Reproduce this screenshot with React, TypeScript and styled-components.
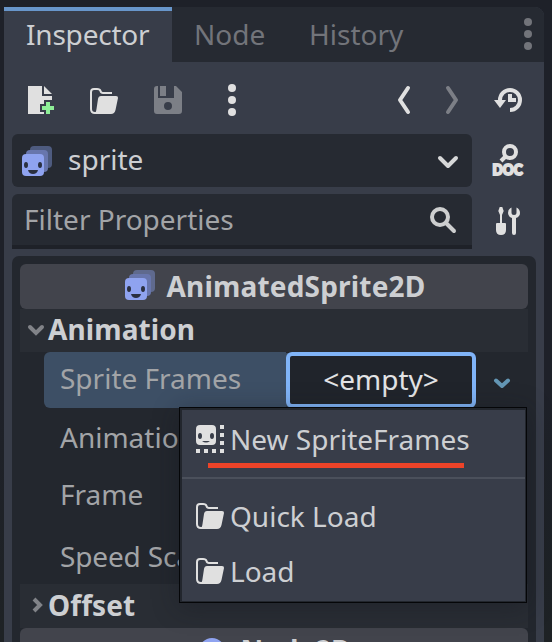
import React from "react";
import styled, { createGlobalStyle } from "styled-components";

const Global = createGlobalStyle`
  * { box-sizing: border-box; }
  body { margin: 0; background: #1e2129; overflow: hidden; }
`;

const Page = styled.div`
  width: 552px;
  height: 642px;
  padding: 7px 8px 0 4px;
  overflow: hidden;
  background: linear-gradient(#1e2129 60%, #1e2225);
  font-family: "Noto Sans", sans-serif;
  font-size: 28px;
  line-height: 38px;
  white-space: pre;
  color: #cdcfd2;
`;

const Dock = styled.div`
  display: flex;
  flex-direction: column;
  height: 660px;
  background: #383d49;
  border-top-right-radius: 9px;
`;

const TabBar = styled.div`
  display: flex;
  flex: none;
  height: 55px;
  background: #262a32;
  border-top-right-radius: 9px;
`;

const Tab = styled.div<{ $active?: boolean; $width: number }>`
  width: ${(p) => p.$width}px;
  height: 55px;
  padding: ${(p) => (p.$active ? "4px 0 0 22px" : "8px 0 0 22px")};
  border-top: ${(p) => (p.$active ? "4px solid #6896cb" : "none")};
  background: ${(p) => (p.$active ? "#383d49" : "transparent")};
  color: ${(p) => (p.$active ? "#cdcfd2" : "#72747a")};
  letter-spacing: ${(p) => (p.$active ? "-0.2px" : "0")};
`;

const TabMenu = styled.div`
  margin: 11px 0 0 auto;
  height: 32px;
`;

const Toolbar = styled.div`
  display: flex;
  flex: none;
  align-items: center;
  height: 72px;
  padding: 4px 20px 0 22px;
`;

const ToolGroup = styled.div<{ $gap: number; $end?: boolean }>`
  display: flex;
  gap: ${(p) => p.$gap}px;
  margin-left: ${(p) => (p.$end ? "auto" : "0")};
`;

const Glyph = styled.svg`
  display: block;
  flex: none;
  overflow: visible;
`;

const FieldRow = styled.div<{ $height: number; $after: number }>`
  display: flex;
  flex: none;
  height: ${(p) => p.$height}px;
  margin: 0 21px ${(p) => p.$after}px 8px;
`;

const ObjectSelect = styled.div`
  display: flex;
  flex: none;
  width: 460px;
  padding: 6px 8px 0 8px;
  border-radius: 6px;
  background: #262a32;
`;

const ObjectName = styled.span`
  margin: 0 auto 0 16px;
`;

const FilterField = styled.div`
  display: flex;
  flex: none;
  width: 460px;
  padding: 6px 13px 0 12px;
  border-radius: 6px 6px 0 0;
  border-bottom: 4px solid #1e2128;
  background: #262a32;
  color: #a2a4a7;
`;

const IconSlot = styled.div<{ $top: number; $end?: boolean }>`
  margin: ${(p) => p.$top}px 0 0 ${(p) => (p.$end ? "auto" : "0")};
`;

const Tree = styled.div`
  flex: 1;
  margin: 0 8px;
  padding: 8px 8px 0;
  border-radius: 7px 7px 0 0;
  background: #23272e;
`;

const Category = styled.div<{ $spacing?: number }>`
  display: flex;
  justify-content: center;
  height: 45px;
  padding-top: 3px;
  gap: 12px;
  border-radius: 6px;
  background: #42444c;
  font-weight: 700;
  letter-spacing: ${(p) => p.$spacing ?? 0}px;
`;

const Section = styled.div<{ $height: number; $lift?: number }>`
  display: flex;
  align-items: center;
  height: ${(p) => p.$height}px;
  padding: 0 0 ${(p) => p.$lift ?? 0}px 4px;
  background: #292d34;
  font-weight: 700;
  letter-spacing: 0.1px;
`;

const Property = styled.div<{ $height: number }>`
  display: flex;
  align-items: center;
  height: ${(p) => p.$height}px;
  margin-left: 24px;
`;

const PropertyLabel = styled.div<{ $selected?: boolean; $spacing?: number }>`
  width: 242px;
  height: ${(p) => (p.$selected ? "56px" : "38px")};
  padding: ${(p) => (p.$selected ? "7px 0 0 16px" : "0 0 0 16px")};
  border-radius: 6px 0 0 6px;
  background: ${(p) => (p.$selected ? "#3d4f65" : "transparent")};
  color: #a2a4a7;
  letter-spacing: ${(p) => p.$spacing ?? 0}px;
`;

const ValueButton = styled.div`
  width: 190px;
  height: 56px;
  padding-top: 4px;
  border: 4px solid #80b4f8;
  border-radius: 6px;
  background: #20242b;
  color: #e2e3e5;
  text-align: center;
  box-shadow: -4px 0 0 -1px #3d4f65;
`;

const ValueArrow = styled.div`
  margin: 5px 0 0 10px;
`;

const Gap = styled.div`
  height: 6px;
`;

const Popup = styled.div`
  position: absolute;
  left: 179px;
  top: 407px;
  width: 348px;
  height: 196px;
  border: 1px solid #050608;
  background: #383d49;
  box-shadow: inset 2px 2px 0 #22262d, inset -1px -1px 0 #22262d,
    0 4px 24px rgba(20, 22, 30, 0.4);
`;

const MenuItem = styled.div<{ $top: number; $height: number }>`
  display: flex;
  height: ${(p) => p.$height}px;
  padding: ${(p) => p.$top}px 0 0 14px;
  gap: 4px;
`;

const Divider = styled.div`
  height: 2px;
  margin: 0 1px 0 2px;
  background: #4b505b;
`;

const Underline = styled.div`
  position: absolute;
  left: 28px;
  top: 55px;
  width: 256px;
  height: 5px;
  background: #ed4328;
`;

const light = "#e0e0e0";

const Svg = ({ children }: { children: React.ReactNode }) => (
  <Glyph width={32} height={32} viewBox="0 0 32 32">
    {children}
  </Glyph>
);

const Dots = ({ color }: { color: string }) => (
  <Svg>
    {[4, 16, 28].map((y) => (
      <circle key={y} cx="16" cy={y} r="4" fill={color} />
    ))}
  </Svg>
);

const FolderIcon = () => (
  <Svg>
    <path
      d="M8 29H7Q3 29 3 25V8Q3 5 6 5H9Q12 5 12.5 7Q13 9 15 9H24"
      fill="none"
      stroke={light}
      strokeWidth="2"
    />
    <path d="M13 12H28Q30.3 12 30 14L27.5 26Q26.6 30 23 30H6Q8 29 8.5 25L10 15Q10.5 12 13 12Z" fill={light} />
  </Svg>
);

const SpriteIcon = () => (
  <Svg>
    <rect x="10" y="2" width="22" height="22" rx="4" fill="#8da5f3" opacity=".4" />
    <rect x="6" y="6" width="22" height="22" rx="4" fill="#6876ad" />
    <rect x="2" y="10" width="22" height="22" rx="4" fill="#8fa3f0" />
    <ellipse cx="6" cy="21" rx="2" ry="3" fill="#2b3040" />
    <ellipse cx="20" cy="21" rx="2" ry="3" fill="#2b3040" />
    <path d="M8 26H18Q17 30 13 30T8 26Z" fill="#2b3040" />
  </Svg>
);

const NewIcon = () => (
  <Svg>
    <path d="M2 2H16V12H26V16H18V20H14V28H18V30H2Z" fill={light} />
    <path d="M18 2L26 10H18Z" fill={light} />
    <path d="M20 18H24V22H28V26H24V30H20V26H16V22H20Z" fill="#8eef97" />
  </Svg>
);

const SaveIcon = () => (
  <Svg>
    <path
      fillRule="evenodd"
      d="M5 2H6V14H22V2H24L30 8V27Q30 30 27 30H5Q2 30 2 27V5Q2 2 5 2ZM16 18A4 4 0 1 0 16 26A4 4 0 1 0 16 18Z"
      fill="#7c7f86"
    />
    <path d="M8 2H14V12H8Z" fill="#7c7f86" />
  </Svg>
);

const Chevron = ({ d, color }: { d: string; color: string }) => (
  <Svg>
    <path d={d} fill="none" stroke={color} strokeWidth="4" strokeLinecap="round" strokeLinejoin="round" />
  </Svg>
);

const HistoryIcon = () => (
  <Svg>
    <path d="M8 17V16A10 10 0 1 1 18 26" fill="none" stroke={light} strokeWidth="4" />
    <path d="M2 16H14L8 24Z" fill={light} />
    <path d="M16 10H20V14H24V18H16Z" fill={light} />
  </Svg>
);

const DocIcon = () => (
  <Svg>
    <circle cx="19" cy="8" r="6" fill="none" stroke={light} strokeWidth="4" />
    <path d="M15 12L10 17" stroke={light} strokeWidth="4" />
    <text
      x="1.5"
      y="31.3"
      fill={light}
      stroke={light}
      strokeWidth="2"
      fontFamily="Lato, sans-serif"
      fontWeight="900"
      fontSize="15"
      textLength="30"
      lengthAdjust="spacingAndGlyphs"
    >
      DOC
    </text>
  </Svg>
);

const ToolsIcon = () => (
  <Svg>
    <path d="M8.7 2H11.3L12.7 6L11 10V18H14Q15 18 15 19V25Q15 30 10 30T5 25V19Q5 18 6 18H9V10L7.3 6Z" fill={light} />
    <path
      d="M20.5 2.4V7.5Q20.5 10 23 10T25.5 7.5V2.4Q29 4 29 8Q29 11.5 25 13V28Q25 30 23 30T21 28V13Q17 11.5 17 8Q17 4 20.5 2.4Z"
      fill={light}
    />
  </Svg>
);

const SearchIcon = () => (
  <Svg>
    <circle cx="13" cy="12" r="8" fill="none" stroke="#cdcecf" strokeWidth="4" />
    <path d="M19 18L27 26" stroke="#cdcecf" strokeWidth="4" strokeLinecap="round" />
  </Svg>
);

const FramesIcon = () => (
  <Svg>
    <path
      fillRule="evenodd"
      d="M6 2H18Q22 2 22 6V18Q22 22 18 22H6Q2 22 2 18V6Q2 2 6 2ZM6 10Q4 10 4 13T6 16T8 13T6 10ZM18 10Q16 10 16 13T18 16T20 13T18 10ZM8 18Q12 21 16 18Z"
      fill={light}
    />
    {[2, 10, 18].map((y) => (
      <rect key={y} x="26" y={y} width="4" height="4" fill={light} />
    ))}
    {[2, 10, 18, 26].map((x) => (
      <rect key={x} x={x} y="26" width="4" height="4" fill={light} />
    ))}
  </Svg>
);

export default function App() {
  return (
    <Page>
      <Global />
      <Dock>
        <TabBar>
          <Tab $active $width={168}>Inspector</Tab>
          <Tab $width={115}>Node</Tab>
          <Tab $width={140}>History</Tab>
          <TabMenu><Dots color="#72747a" /></TabMenu>
        </TabBar>
        <Toolbar>
          <ToolGroup $gap={30}>
            <NewIcon />
            <ToolGroup $gap={32}>
              <FolderIcon />
              <SaveIcon />
              <Dots color={light} />
            </ToolGroup>
          </ToolGroup>
          <ToolGroup $gap={20} $end>
            <Chevron d="M20 4L12 16L20 28" color={light} />
            <Chevron d="M8 4L16 16L8 28" color="#7c7f86" />
            <HistoryIcon />
          </ToolGroup>
        </Toolbar>
        <FieldRow $height={53} $after={7}>
          <ObjectSelect>
            <IconSlot $top={4}><SpriteIcon /></IconSlot>
            <ObjectName>sprite</ObjectName>
            <IconSlot $top={6}><Chevron d="M8 12L16 20L24 12" color="#d7d8d9" /></IconSlot>
          </ObjectSelect>
          <IconSlot $top={10} $end><DocIcon /></IconSlot>
        </FieldRow>
        <FieldRow $height={55} $after={7}>
          <FilterField>
            Filter Properties
            <IconSlot $top={5} $end><SearchIcon /></IconSlot>
          </FilterField>
          <IconSlot $top={11} $end><ToolsIcon /></IconSlot>
        </FieldRow>
        <Tree>
          <Category $spacing={0.18}>
            <IconSlot $top={1}><SpriteIcon /></IconSlot>
            AnimatedSprite2D
          </Category>
          <Section $height={43} $lift={3}>
            <Glyph width="24" height="32" viewBox="0 0 24 32">
              <path d="M6 14L12 20L18 14" fill="none" stroke="#818388" strokeWidth="4" strokeLinecap="round" />
            </Glyph>
            Animation
          </Section>
          <Property $height={56}>
            <PropertyLabel $selected>Sprite Frames</PropertyLabel>
            <ValueButton>&lt;empty&gt;</ValueButton>
            <ValueArrow><Chevron d="M10 13.5L16 19L22 13.5" color="#6497b5" /></ValueArrow>
          </Property>
          <Property $height={58}><PropertyLabel>Animation</PropertyLabel></Property>
          <Property $height={56}><PropertyLabel>Frame</PropertyLabel></Property>
          <Gap />
          <Property $height={56}><PropertyLabel $spacing={-0.15}>Speed Scale</PropertyLabel></Property>
          <Section $height={44} $lift={2}>
            <Glyph width="24" height="32" viewBox="0 0 24 32">
              <path d="M10 10L16 16L10 22" fill="none" stroke="#818388" strokeWidth="4" />
            </Glyph>
            Offset
          </Section>
          <Category>
            <Svg><circle cx="16" cy="20" r="11" fill="none" stroke="#8fa3f0" strokeWidth="4" /></Svg>
            Node2D
          </Category>
        </Tree>
      </Dock>
      <Popup>
        <MenuItem $top={12} $height={69}>
          <IconSlot $top={3}><FramesIcon /></IconSlot>
          New SpriteFrames
        </MenuItem>
        <Divider />
        <MenuItem $top={18} $height={55}>
          <IconSlot $top={2}><FolderIcon /></IconSlot>
          Quick Load
        </MenuItem>
        <MenuItem $top={18} $height={55}>
          <IconSlot $top={2}><FolderIcon /></IconSlot>
          Load
        </MenuItem>
        <Underline />
      </Popup>
    </Page>
  );
}
